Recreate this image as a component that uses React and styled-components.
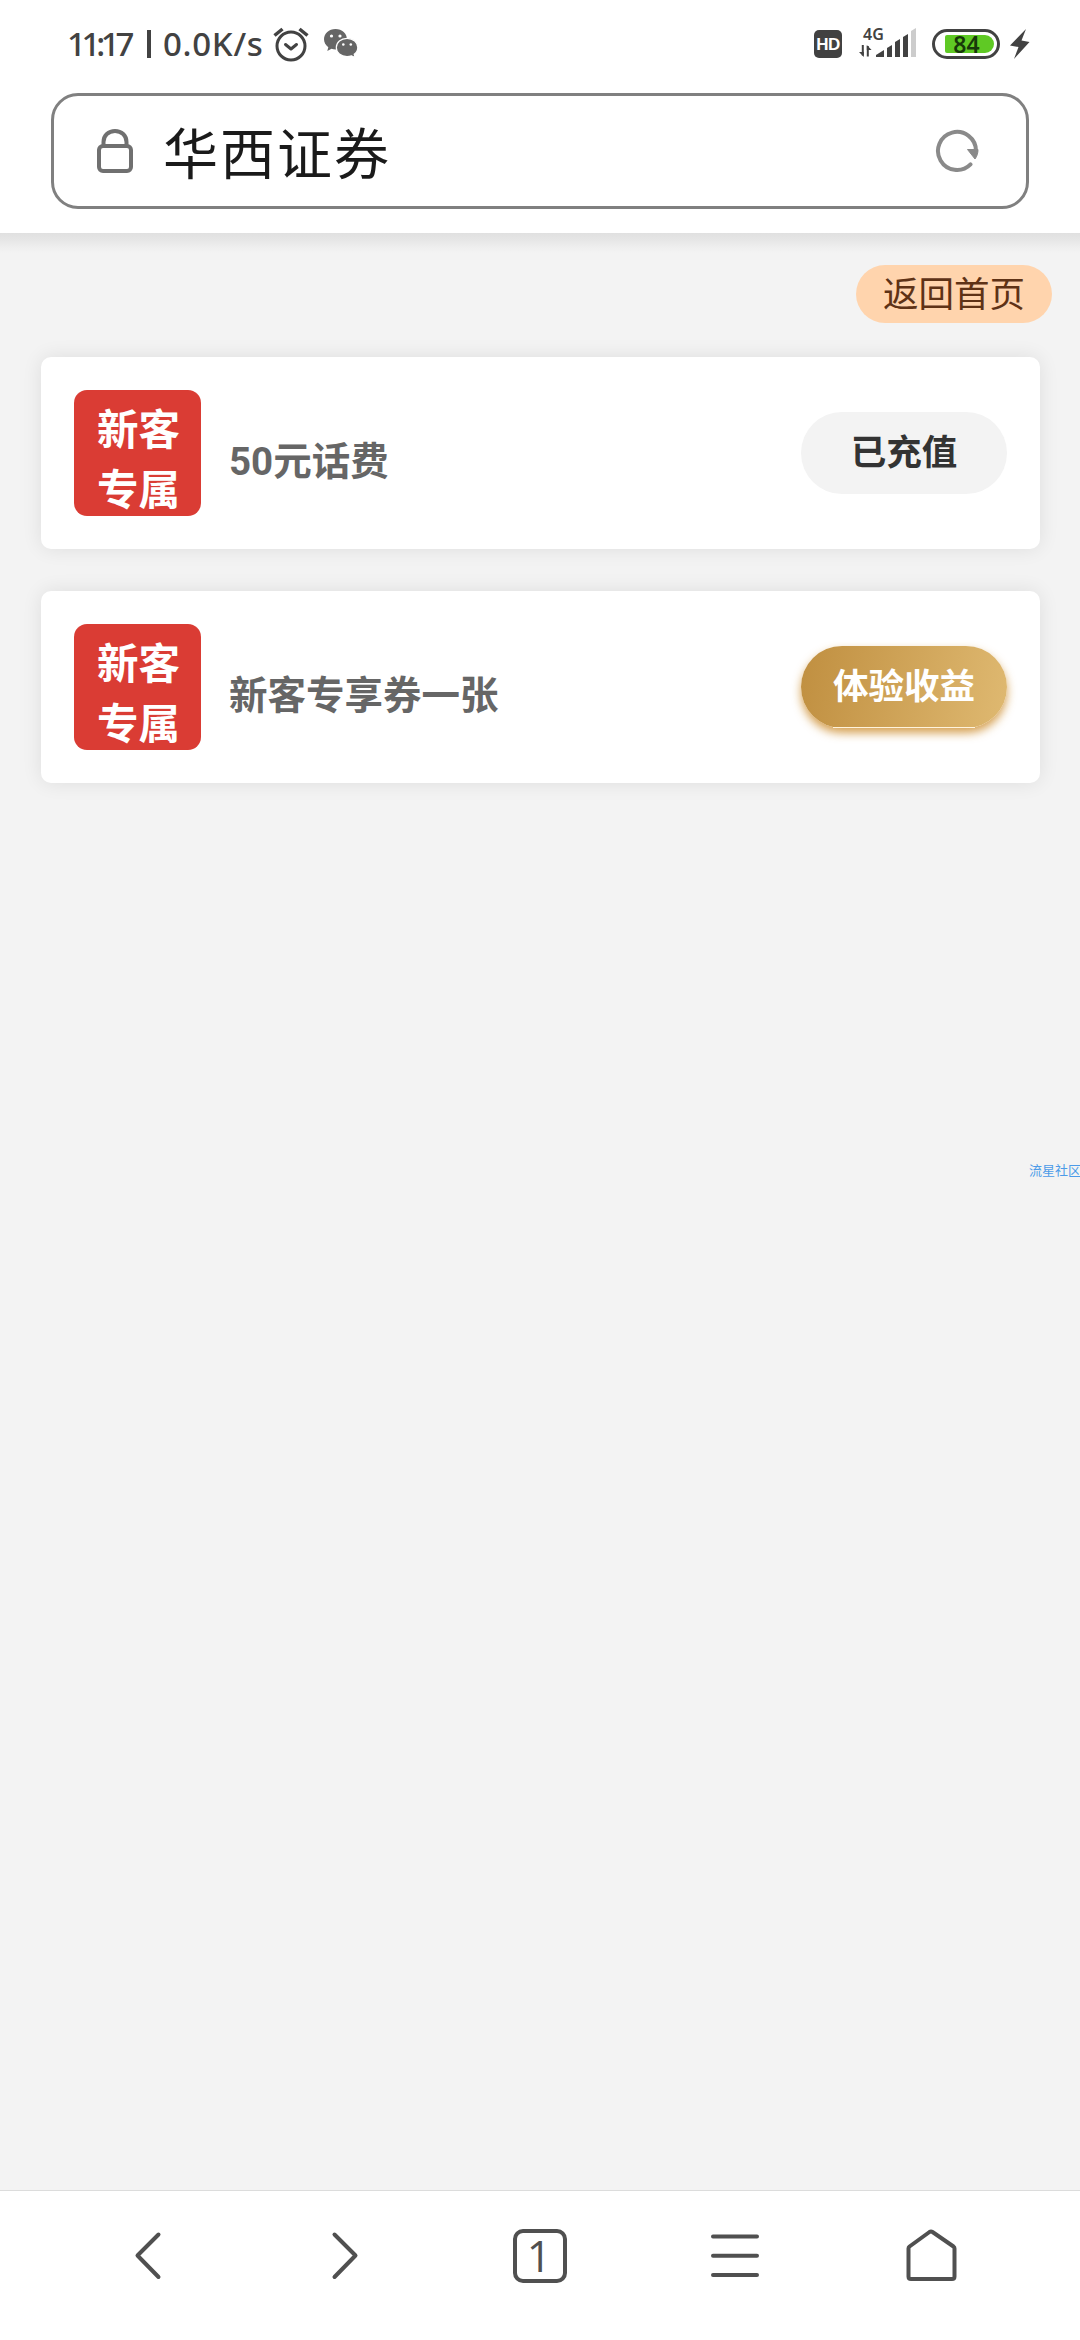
import React from 'react'
import styled, { createGlobalStyle, css } from 'styled-components'

const GlobalStyle = createGlobalStyle`
  * {
    box-sizing: border-box;
  }
  body {
    margin: 0;
    background: #f3f3f3;
    font-family: Roboto, 'Noto Sans CJK SC', sans-serif;
  }
  svg {
    display: block;
    flex: none;
  }
`

const Screen = styled.div`
  display: flex;
  flex-direction: column;
  width: 1080px;
  height: 2340px;
  overflow: hidden;
  background: #f3f3f3;
`

const Header = styled.header`
  flex: none;
  height: 233px;
  background: #fff;
`

const StatusBar = styled.div`
  display: flex;
  justify-content: space-between;
  height: 93px;
  padding: 22px 50px 0 67px;
`

const StatusGroup = styled.div`
  display: flex;
  align-items: center;
  height: 44px;
`

const StatusText = styled.span`
  width: ${props => props.$width}px;
  font-family: 'Noto Sans', sans-serif;
  font-size: 33px;
  font-weight: 500;
  line-height: 44px;
  letter-spacing: ${props => props.$spacing || 0}px;
  white-space: nowrap;
  color: #424242;
`

const Divider = styled.span`
  width: 4px;
  height: 28px;
  margin-right: 12px;
  background: #424242;
`

const HdBadge = styled.span`
  width: 28px;
  height: 28px;
  margin-right: 17px;
  border-radius: 5px;
  background: #414141;
  color: #fff;
  font-family: 'Liberation Sans', sans-serif;
  font-size: 17px;
  font-weight: 700;
  line-height: 29px;
  letter-spacing: -0.5px;
  text-align: center;
`

const Network = styled.div`
  width: 58px;
  height: 32px;
  margin-right: 15px;
`

const NetworkType = styled.div`
  height: 15px;
  padding-left: 4px;
  font-family: 'Noto Sans', sans-serif;
  font-size: 16px;
  font-weight: 600;
  line-height: 12px;
  color: #424242;
`

const Battery = styled.div`
  display: flex;
  width: 68px;
  height: 30px;
  margin-right: 10px;
  padding: 3px 3px 3px 10px;
  border: 3px solid #424242;
  border-radius: 15px;
`

const BatteryLevel = styled.div`
  width: 49px;
  height: 18px;
  border-radius: 2px 9px 9px 2px;
  background: #5fc924;
  color: #17380a;
  font-family: 'Noto Sans', sans-serif;
  font-size: 23px;
  font-weight: 600;
  line-height: 18px;
  text-align: center;
  padding-right: 6px;
`

const AddressBar = styled.div`
  display: flex;
  align-items: center;
  height: 116px;
  margin: 0 51px;
  padding: 0 46px 0 42px;
  border: 3px solid #808080;
  border-radius: 27px;
`

const PageTitle = styled.h1`
  flex: 1;
  margin: 0 0 3px 30px;
  font-family: 'Noto Sans CJK SC', sans-serif;
  font-size: 55px;
  font-weight: 400;
  line-height: 80px;
  letter-spacing: 2px;
  color: #1a1a1a;
`

const Content = styled.main`
  flex: 1;
  padding: 32px 40px 0 41px;
  background: linear-gradient(#e0e0e0, #e5e5e5 6px, #eeeeee 14px, #f3f3f3 20px);
`

const BackHome = styled.button`
  display: block;
  width: 196px;
  height: 58px;
  margin: 0 -12px 34px auto;
  padding: 0 0 4px;
  border: 0;
  border-radius: 29px;
  background: #ffd4ad;
  color: #5e3216;
  font-family: 'Noto Sans CJK SC', sans-serif;
  font-size: 35.5px;
  line-height: 54px;
`

const Card = styled.section`
  display: flex;
  align-items: flex-start;
  height: 192px;
  margin-bottom: 42px;
  padding: 33px;
  border-radius: 10px;
  background: #fff;
  box-shadow: 0 0 20px rgba(0, 0, 0, 0.09);
`

const NewBadge = styled.div`
  width: 127px;
  height: 126px;
  padding: 11px 0 0 23px;
  border-radius: 13px;
  background: #da3c34;
  color: #fff;
  font-size: 41.5px;
  font-weight: 700;
  line-height: 60px;
`

const CardTitle = styled.h2`
  flex: 1;
  margin: 42px 0 0 28px;
  font-size: 38.5px;
  font-weight: 700;
  line-height: 60px;
  color: #666;
`

const CardButton = styled.button`
  width: 206px;
  height: 82px;
  margin-top: 22px;
  padding: 0 0 6px;
  border: 0;
  border-radius: 41px;
  background: #f3f3f3;
  color: #333;
  font-family: 'Noto Sans CJK SC', sans-serif;
  font-size: 35.5px;
  font-weight: 700;
  line-height: 76px;

  ${props => props.$gold && css`
    display: flex;
    flex-direction: column;
    align-items: center;
    padding: 0;
    background: linear-gradient(100deg, #c08f40, #dfb971);
    color: #fff;
    box-shadow: 0 5px 10px rgba(200, 130, 25, 0.75);

    &::after {
      content: '';
      width: 142px;
      height: 1px;
      margin-top: 5px;
      background: #fff3dc;
    }
  `}
`

const Watermark = styled.div`
  width: 51px;
  margin: 377px -40px 0 auto;
  overflow: hidden;
  font-family: 'Noto Sans CJK SC', sans-serif;
  font-size: 13px;
  line-height: 20px;
  white-space: nowrap;
  color: #4c9be8;
`

const NavBar = styled.nav`
  display: flex;
  flex: none;
  justify-content: space-between;
  height: 150px;
  padding: 34px 119px 0 117px;
  border-top: 1px solid #dcdcdc;
  background: #fff;
`

const NavIcon = styled.svg.attrs({ width: 60, height: 60, viewBox: '0 0 60 60' })`
  fill: none;
  stroke: #505050;
  stroke-width: 4;
  stroke-linecap: round;
  stroke-linejoin: round;
`

const TabCount = styled.div`
  width: 54px;
  height: 54px;
  margin: 4px 2px 0 4px;
  padding-right: 2px;
  border: 4px solid #505050;
  border-radius: 10px;
  color: #505050;
  font-family: 'Open Sans', sans-serif;
  font-size: 43px;
  line-height: 46px;
  text-align: center;
`

const AlarmIcon = () => (
  <svg width="36" height="36" viewBox="0 0 36 36" fill="none" stroke="#424242" strokeWidth="3">
    <circle cx="18" cy="20" r="14" />
    <path d="M12.5 18.5l5.5 4.5 5.5-4.5" strokeLinecap="round" strokeLinejoin="round" />
    <path d="M1.5 9.5l8-6.5M34.5 9.5l-8-6.5" strokeWidth="3.5" />
  </svg>
)

const WechatSvg = styled.svg`
  margin-left: 15px;
`

const WechatIcon = () => (
  <WechatSvg width="34" height="30" viewBox="0 0 34 30">
    <path
      d="M11.5 0C5 0 0 4.600 0 10.300c0 3.300 1.700 6 4.300 7.900L3.300 22l4.200-2.200c1.300.4 2.600.6 4 .6C18 20.400 23 15.900 23 10.300S18 0 11.500 0z"
      fill="#666"
    />
    <path
      d="M23 9.300c6.200 0 10.800 4 10.800 9.200 0 2.900-1.400 5.200-3.600 6.800l.9 3.300-3.600-1.800c-1.400.5-2.900.8-4.500.8-6.100 0-10.700-4-10.700-9.100s4.600-9.200 10.700-9.200z"
      fill="#666"
      stroke="#fff"
      strokeWidth="1.200"
    />
    <g fill="#fff">
      <circle cx="7.500" cy="7" r="1.600" />
      <circle cx="16" cy="7" r="1.600" />
      <circle cx="19.300" cy="15.500" r="1.300" />
      <circle cx="26.800" cy="15.500" r="1.300" />
    </g>
  </WechatSvg>
)

const SignalIcon = () => (
  <svg width="58" height="16" viewBox="0 0 58 16" overflow="visible" fill="#424242">
    <path d="M3.800 2v10.500M8.800 13.500V3" stroke="#424242" strokeWidth="2" />
    <path d="M0 9h4.800v5zM7.800 2v5h4.800z" />
    <path d="M17 14v-2l8-5v7z" />
    <path d="M28 14V5l5-3v12z" />
    <path d="M36 14V-1l5-3v18z" />
    <path d="M44 14V-6l5-3v23z" />
    <path d="M52 14v-26l5-3v29z" fill="#ccc" />
  </svg>
)

const BoltIcon = () => (
  <svg width="20" height="30" viewBox="0 0 20 30">
    <path d="M16 0L0 16.500l8.500 1.500L4 30l15.500-17-8-1.500z" fill="#424242" />
  </svg>
)

const LockIcon = () => (
  <svg width="37" height="46" viewBox="0 0 37 46" fill="none" stroke="#707070" strokeWidth="4">
    <rect x="3" y="18" width="32" height="25" rx="4" />
    <path d="M7.500 18v-4C7.500 7.500 12.500 3 19 3s11.500 4.500 11.500 11v4" />
  </svg>
)

const ReloadIcon = () => (
  <svg width="46" height="46" viewBox="0 0 46 46" fill="none" stroke="#8a8a8a" strokeWidth="4">
    <path d="M36.500 36.300A19 19 0 1 1 42 23" strokeLinecap="round" />
    <path d="M33.500 21.500h10.500c0 3.500-.8 6.500-3 9.500z" fill="#8a8a8a" strokeWidth="1" strokeLinejoin="round" />
  </svg>
)

const offers = [
  { title: '50元话费', action: '已充值' },
  { title: '新客专享券一张', action: '体验收益', gold: true },
]

export default function App() {
  return <>
    <GlobalStyle />
    <Screen>
      <Header>
        <StatusBar>
          <StatusGroup>
            <StatusText $width={80} $spacing={-4.3}>11:17</StatusText>
            <Divider />
            <StatusText $width={110} $spacing={0.7}>0.0K/s</StatusText>
            <AlarmIcon />
            <WechatIcon />
          </StatusGroup>
          <StatusGroup>
            <HdBadge>HD</HdBadge>
            <Network>
              <NetworkType>4G</NetworkType>
              <SignalIcon />
            </Network>
            <Battery>
              <BatteryLevel>84</BatteryLevel>
            </Battery>
            <BoltIcon />
          </StatusGroup>
        </StatusBar>
        <AddressBar>
          <LockIcon />
          <PageTitle>华西证券</PageTitle>
          <ReloadIcon />
        </AddressBar>
      </Header>

      <Content>
        <BackHome>返回首页</BackHome>
        {offers.map(offer => (
          <Card key={offer.title}>
            <NewBadge>新客<br />专属</NewBadge>
            <CardTitle>{offer.title}</CardTitle>
            <CardButton $gold={offer.gold}>{offer.action}</CardButton>
          </Card>
        ))}
        <Watermark>流星社区</Watermark>
      </Content>

      <NavBar>
        <NavIcon><path d="M41.500 9.500l-21 21 21 21.500" /></NavIcon>
        <NavIcon><path d="M21.500 9.500l21 21-21 21.500" /></NavIcon>
        <TabCount>1</TabCount>
        <NavIcon><path d="M8 11.500h44M8 30.800h44M8 50h44" /></NavIcon>
        <NavIcon>
          <path d="M28.500 7q1.500-1 3 0l21 14.500q1 .8 1 2v28q0 2.500-2.500 2.500H10q-2.500 0-2.500-2.500v-28q0-1.200 1-2z" />
        </NavIcon>
      </NavBar>
    </Screen>
  </>
}
